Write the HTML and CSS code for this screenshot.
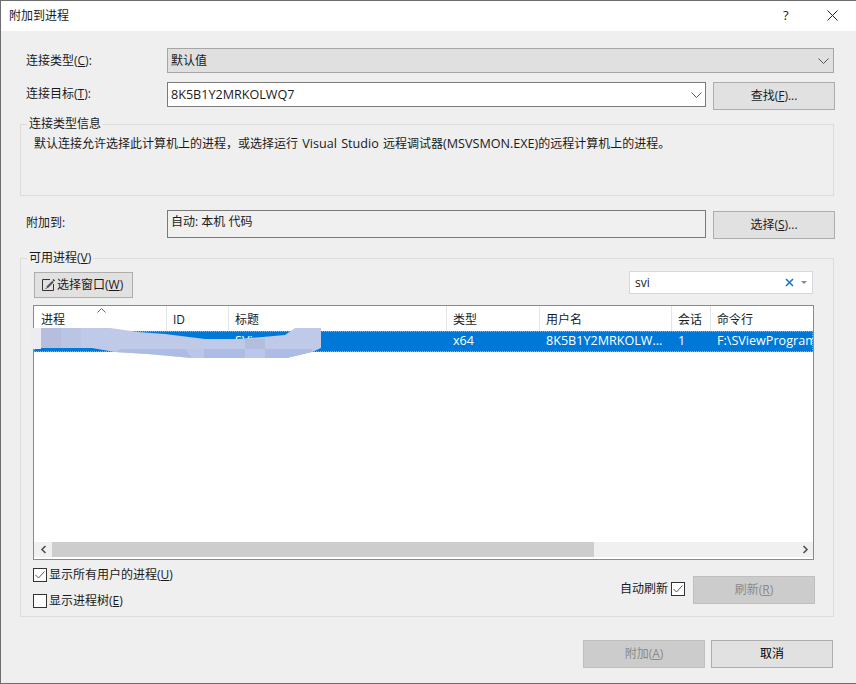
FILE: index.html
```html
<!DOCTYPE html>
<html lang="zh-CN">
<head>
<meta charset="utf-8">
<title>附加到进程</title>
<link rel="stylesheet" href="styles.css">
</head>
<body>
<div class="window">
  <header class="titlebar">
    <span class="title">附加到进程</span>
    <span class="help">?</span>
    <svg class="close" width="11" height="11" viewBox="0 0 11 11"><path d="M.5.5l10 10M10.5.5l-10 10" stroke="#222" fill="none"/></svg>
  </header>
  <main class="content">
    <div class="row row-type">
      <label class="row-label">连接类型(<u>C</u>):</label>
      <div class="select">
        <span>默认值</span>
        <svg class="chev" width="11" height="6" viewBox="0 0 11 6"><path d="M.5.5l5 5 5-5" stroke="#555" fill="none"/></svg>
      </div>
    </div>
    <div class="row row-target">
      <label class="row-label">连接目标(<u>T</u>):</label>
      <div class="input">
        <span class="lat">8K5B1Y2MRKOLWQ7</span>
        <svg class="chev" width="11" height="6" viewBox="0 0 11 6"><path d="M.5.5l5 5 5-5" stroke="#555" fill="none"/></svg>
      </div>
      <button class="btn side-btn find">查找(<u>F</u>)...</button>
    </div>
    <fieldset class="group info">
      <legend>连接类型信息</legend>
      <p>默认连接允许选择此计算机上的进程，或选择运行<span class="lat wide"> Visual Studio </span>远程调试器<span class="lat">(MSVSMON.EXE)</span>的远程计算机上的进程。</p>
    </fieldset>
    <div class="row row-attach">
      <label class="row-label">附加到:</label>
      <div class="attach-box">自动: 本机 代码</div>
      <button class="btn side-btn">选择(<u>S</u>)...</button>
    </div>
    <fieldset class="group procs">
      <legend>可用进程(<u>V</u>)</legend>
      <div class="toolbar">
        <button class="btn pick">
          <svg width="15" height="15" viewBox="0 0 15 15"><path d="M9 1.500H1.500v11h11V6" stroke="#333" fill="none"/><path d="M6 9.500l6-6" stroke="#555" stroke-width="2.200" fill="none"/><path d="M4.500 11l1.500-1.500" stroke="#444" fill="none"/><path d="M11.500 2l1-1 1.500 1.500-1 1z" fill="#333"/></svg>
          <span>选择窗口(<u>W</u>)</span>
        </button>
        <div class="search">
          <span class="search-text">svi</span>
          <svg class="clear" width="9" height="9" viewBox="0 0 9 9"><path d="M1 1l7 7M8 1l-7 7" stroke="#1e78c8" stroke-width="1.6" fill="none"/></svg>
          <span class="drop"></span>
        </div>
      </div>
      <div class="list">
        <div class="thead">
          <span class="cell">进程</span><span class="cell">ID</span><span class="cell">标题</span><span class="cell">类型</span><span class="cell">用户名</span><span class="cell">会话</span><span class="cell last">命令行</span>
          <svg class="sort" width="9" height="5" viewBox="0 0 9 5"><path d="M.5 4.500l4-4 4 4" stroke="#666" fill="none"/></svg>
        </div>
        <div class="trow">
          <span class="cell"></span><span class="cell"></span><span class="cell">SVi</span><span class="cell">x64</span><span class="cell">8K5B1Y2MRKOLW...</span><span class="cell">1</span><span class="cell last">F:\SViewProgram</span>
        </div>
        <div class="tbody"></div>
        <div class="hscroll">
          <svg class="arrow" width="16" height="15" viewBox="0 0 16 15"><path d="M9.500 4l-3.500 3.500 3.500 3.500" stroke="#505050" stroke-width="1.6" fill="none"/></svg>
          <div class="track"><div class="thumb"></div></div>
          <svg class="arrow" width="16" height="15" viewBox="0 0 16 15"><path d="M6.500 4l3.500 3.500-3.500 3.500" stroke="#505050" stroke-width="1.6" fill="none"/></svg>
        </div>
        <svg class="smudge" width="292" height="32" viewBox="0 0 292 32">
          <path d="M0 0H10V21H0z" fill="#ececf2"/>
          <path d="M10 0H79L107 4 134 6 174 11 207 11 254 7 264 0H290V20L281 24 256 30H161L117 26 84 24 61 20H10z" fill="#bfcae9"/>
          <path d="M10 0H30V20H10z" fill="#b5bedd"/>
          <path d="M30 0H50V20H30z" fill="#bac4e3"/>
          <path d="M214 11H234V21H214z" fill="#b2bedb"/>
          <path d="M84 24L90 21H256L281 21V24L256 30H161L117 26z" fill="#adbce4"/>
          <path d="M154 21H173V30H161zM214 21H234V30H214z" fill="#bac6ea"/>
        </svg>
      </div>
      <div class="options">
        <div class="checks">
          <label class="check"><svg class="box" width="14" height="14" viewBox="0 0 14 14"><rect x=".5" y=".5" width="13" height="13" fill="#fff" stroke="#333"/><path d="M2.500 7l3 3 6-6.500" stroke="#555" fill="none"/></svg><span>显示所有用户的进程(<u>U</u>)</span></label>
          <label class="check"><svg class="box" width="14" height="14" viewBox="0 0 14 14"><rect x=".5" y=".5" width="13" height="13" fill="#fff" stroke="#333"/></svg><span>显示进程树(<u>E</u>)</span></label>
        </div>
        <div class="refresh">
          <label class="check auto"><span>自动刷新</span><svg class="box" width="14" height="14" viewBox="0 0 14 14"><rect x=".5" y=".5" width="13" height="13" fill="#fff" stroke="#333"/><path d="M2.500 7l3 3 6-6.500" stroke="#555" fill="none"/></svg></label>
          <button class="btn side-btn disabled">刷新(<u>R</u>)</button>
        </div>
      </div>
    </fieldset>
    <footer class="footer">
      <button class="btn side-btn disabled">附加(<u>A</u>)</button>
      <button class="btn side-btn cancel">取消</button>
    </footer>
  </main>
</div>
</body>
</html>
```
FILE: styles.css
```css
* { box-sizing: border-box; }
html, body { margin: 0; padding: 0; }
body { width: 856px; height: 684px; overflow: hidden; font: 12px/16px "Open Sans", "Noto Sans CJK SC", sans-serif; color: #1a1a1a; background: #efefef; }
u { text-underline-offset: 1px; }
.lat { font-size: 12.6px; }
.wide { word-spacing: 1px; }
.window { width: 856px; height: 684px; border: 1px solid #6e6e6e; border-right: 0; background: #efefef; display: flex; flex-direction: column; }
.titlebar { height: 30px; flex: none; background: #fff; display: flex; align-items: center; padding-left: 8px; position: relative; }
.title { flex: 1; }
.help { position: absolute; left: 782px; top: 6px; font-size: 13px; }
.close { position: absolute; left: 826px; top: 9px; }
.content { flex: 1; padding: 17px 0 0 19px; display: flex; flex-direction: column; }
.row { display: flex; }
.row-label { width: 147px; padding: 0 0 0 6px; flex: none; }
.row-type { height: 25px; width: 814px; align-items: center; }
.select { flex: 1; height: 25px; background: #e0e0e0; border: 1px solid #a6a6a6; display: flex; align-items: center; justify-content: space-between; padding: 0 4px 0 3px; }
.row-target { margin-top: 9px; height: 25px; align-items: center; }
.row-target .row-label { padding-bottom: 2px; }
.input { width: 539px; height: 25px; background: #fff; border: 1px solid #7a7a7a; display: flex; align-items: center; justify-content: space-between; padding: 0 3px 0 3px; }
.btn { font: inherit; color: inherit; background: #e1e1e1; border: 1px solid #adadad; padding: 0; margin: 0; }
.side-btn { width: 122px; height: 28px; flex: none; }
.find { margin: 3px 0 0 7px; }
.group { margin: 0; padding: 0; border: 1px solid #dcdcdc; width: 814px; min-inline-size: 0; }
.group legend { margin-left: 6px; padding: 0 2px; line-height: 14px; }
.info { height: 79px; margin-top: 10px; }
.info p { margin: 5px 0 0 13px; }
.row-attach { margin-top: 14px; height: 28px; }
.row-attach .row-label { line-height: 26px; }
.attach-box { width: 539px; height: 28px; background: #f0f0f0; border: 1px solid #7a7a7a; padding: 3px 3px; }
.row-attach .btn { margin: 1px 0 0 7px; }
.procs { height: 366px; margin-top: 13px; padding: 6px 0 0 13px; position: relative; }
.procs legend { margin-left: -7px; }
.toolbar { display: flex; justify-content: space-between; align-items: flex-start; padding-right: 20px; }
.pick { width: 99px; height: 26px; margin-top: 1px; display: flex; align-items: center; padding-left: 6px; gap: 1px; }
.search { width: 184px; height: 23px; background: #fff; border: 1px solid #d6d6e4; display: flex; align-items: center; padding: 0 5px; }
.search-text { flex: 1; }
.clear { margin-right: 7px; }
.drop { width: 0; height: 0; border: 3px solid transparent; border-top: 3px solid #888; border-bottom: 0; }
.list { width: 781px; height: 255px; margin: 7px 0 0 -1px; border: 1px solid #8a8a8a; background: #fff; position: relative; display: flex; flex-direction: column; }
.thead, .trow { display: grid; grid-template-columns: 133px 62px 218px 93px 132px 39px 102px; }
.thead { height: 25px; flex: none; position: relative; }
.thead .cell { border-right: 1px solid #e5e5e5; line-height: 25px; padding-top: 1px; }
.thead .last { border-right: 0; }
.cell { padding-left: 6px; white-space: nowrap; overflow: hidden; }
.thead .cell:first-child { padding-left: 7px; }
.sort { position: absolute; left: 63px; top: 2px; }
.trow { height: 21px; flex: none; background: #0078d7; color: #fff; font-size: 12.6px; line-height: 20px; outline: 1px dotted #d9a070; outline-offset: -1px; }
.tbody { flex: 1; }
.hscroll { height: 15px; flex: none; margin-bottom: 2px; display: flex; background: #f0f0f0; }
.arrow { flex: none; margin-left: 2px; }
.hscroll .arrow:last-child { margin: 0; }
.track { flex: 1; }
.thumb { width: 542px; height: 15px; background: #cdcdcd; }
.smudge { position: absolute; left: -3px; top: 22px; }
.options { display: flex; justify-content: space-between; padding-right: 18px; }
.checks { display: flex; flex-direction: column; gap: 10px; margin: 7px 0 0 -1px; }
.check { display: flex; align-items: center; gap: 2px; height: 16px; }
.refresh { display: flex; margin-top: 16px; height: 28px; }
.auto { margin: 5px 8px 0 0; gap: 3px; }
.disabled { background: #cccccc; border-color: #bfbfbf; color: #8a8a8a; }
.footer { display: flex; gap: 6px; padding-left: 563px; margin-top: 23px; }
.cancel { color: #000; }
```
